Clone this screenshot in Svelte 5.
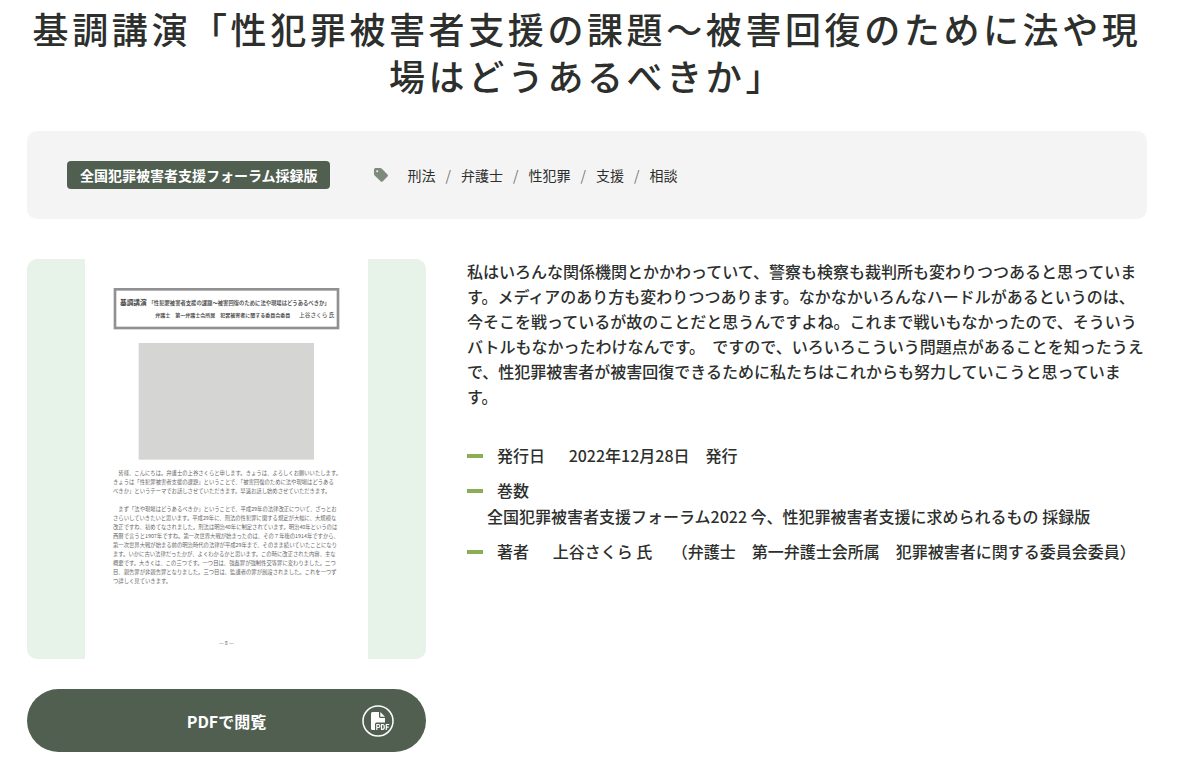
<script lang="ts">
	interface Detail {
		term: string;
		value: string;
	}

	const title = '基調講演「性犯罪被害者支援の課題～被害回復のために法や現場はどうあるべきか」';
	const category = '全国犯罪被害者支援フォーラム採録版';
	const tags = ['刑法', '弁護士', '性犯罪', '支援', '相談'];

	const description =
		'私はいろんな関係機関とかかわっていて、警察も検察も裁判所も変わりつつあると思っています。メディアのあり方も変わりつつあります。なかなかいろんなハードルがあるというのは、今そこを戦っているが故のことだと思うんですよね。これまで戦いもなかったので、そういうバトルもなかったわけなんです。\u00a0 ですので、いろいろこういう問題点があることを知ったうえで、性犯罪被害者が被害回復できるために私たちはこれからも努力していこうと思っています。';

	const details: Detail[] = [
		{ term: '発行日', value: '2022年12月28日　発行' },
		{ term: '巻数', value: '全国犯罪被害者支援フォーラム2022 今、性犯罪被害者支援に求められるもの 採録版' },
		{ term: '著者', value: '上谷さくら 氏 　（弁護士　第一弁護士会所属　犯罪被害者に関する委員会委員）' }
	];

	// First page of the document, line by line
	const pageLines = [
		'　皆様、こんにちは。弁護士の上谷さくらと申します。きょうは、よろしくお願いいたします。',
		'きょうは「性犯罪被害者支援の課題」ということで、「被害回復のために法や現場はどうある',
		'べきか」というテーマでお話しさせていただきます。早速お話し始めさせていただきます。',
		'',
		'　まず「法や現場はどうあるべきか」ということで、平成29年の法律改正について、ざっとお',
		'さらいしていきたいと思います。平成29年に、刑法の性犯罪に関する規定が大幅に、大規模な',
		'改正ですね、初めてなされました。刑法は明治40年に制定されています。明治40年というのは',
		'西暦で言うと1907年ですね。第一次世界大戦が始まったのは、その７年後の1914年ですから、',
		'第一次世界大戦が始まる前の明治時代の法律が平成29年まで、そのまま続いていたことになり',
		'ます。いかに古い法律だったかが、よくわかるかと思います。この時に改正された内容、主な',
		'概要です。大きくは、この三つです。一つ目は、強姦罪が強制性交等罪に変わりました。二つ',
		'目、親告罪が非親告罪となりました。三つ目は、監護者の罪が創設されました。これを一つず',
		'つ詳しく見ていきます。'
	];
</script>

<svelte:head>
	<title>{title}</title>
</svelte:head>

<main class="article" lang="ja">
	<h1>{title}</h1>

	<div class="meta">
		<span class="category">{category}</span>
		<div class="tags">
			<svg class="tag-icon" viewBox="0 0 14 14" aria-hidden="true">
				<path
					fill-rule="evenodd"
					d="M0 1.5Q0 0 1.5 0H6Q7 0 7.6.6L13.5 6.5Q14.4 7.5 13.5 8.5L8.8 13.3Q7.7 14.3 6.6 13.3L.6 7.4Q0 6.8 0 6ZM3.2 2.3a.9.9 0 1 0 .01 0Z"
				/>
			</svg>
			<ul>
				{#each tags as tag}
					<li><a href="#{tag}">{tag}</a></li>
				{/each}
			</ul>
		</div>
	</div>

	<div class="content">
		<div class="media">
			<div class="preview">
				<svg viewBox="0 0 849 1200" role="img" aria-label={title}>
					<rect class="paper" width="849" height="1200" />
					<rect class="frame" x="90" y="91" width="669" height="116" />
					<text class="page-title" x="105" y="137">基調講演</text>
					<text class="page-subtitle" x="734" y="137" text-anchor="end">「性犯罪被害者支援の課題～被害回復のために法や現場はどうあるべきか」</text>
					<text class="page-author" x="211" y="175">弁護士　第一弁護士会所属　犯罪被害者に関する委員会委員</text>
					<text class="page-speaker" x="748" y="175" text-anchor="end">上谷さくら 氏</text>
					<rect class="photo" x="161" y="252" width="526" height="350" />
					{#each pageLines as line, i}
						<text class="page-line" x="84" y={647 + i * 27}>{line}</text>
					{/each}
					<text class="page-line" x="424" y="1158" text-anchor="middle">— 8 —</text>
				</svg>
			</div>

			<a class="pdf-button" href="#pdf">
				<span class="pdf-label">PDFで閲覧</span>
				<svg class="pdf-icon" viewBox="0 0 32 32" aria-hidden="true">
					<circle cx="16" cy="16" r="15" fill="none" stroke="#fff" stroke-width="1.5" />
					<path d="M10.5 7H17V11.5Q17 13 18.5 13H23V17.5H14.5Q13 17.5 13 19V25H10.5Q9 25 9 23.5V8.5Q9 7 10.5 7ZM18.3 7L23 11.7H18.3Z" fill="#fff" />
					<path
						d="M14.8 25V19.5H16.5Q17.8 19.5 17.8 21T16.5 22.5H14.8M19.5 19.5V24.4H20.6Q22.3 24.4 22.3 22T20.6 19.5ZM24.3 25V19.5H27.2M24.3 22.2H26.7"
						fill="none"
						stroke="#fff"
						stroke-width="1.2"
					/>
				</svg>
			</a>
		</div>

		<div class="info">
			<p>{description}</p>
			<dl>
				{#each details as detail}
					<div class="row">
						<dt>{detail.term}</dt>
						<dd>{detail.value}</dd>
					</div>
				{/each}
			</dl>
		</div>
	</div>
</main>

<style>
	:global(body) {
		margin: 0;
		background: #fff;
	}

	.article {
		max-width: 1120px;
		margin: 0 auto;
		padding: 5px 30px 0 27px;
		font-family: 'Noto Sans CJK JP', sans-serif;
		font-size: 16px;
		font-weight: 500;
		line-height: 26px;
		color: #2d2f2d;
	}

	h1 {
		margin: 0 0 32px;
		font-size: 36px;
		font-weight: 500;
		line-height: 47px;
		letter-spacing: 0.1em;
		text-align: center;
	}

	a {
		color: inherit;
		text-decoration: none;
	}

	/* Category and tags */
	.meta {
		display: flex;
		flex-wrap: wrap;
		align-items: center;
		gap: 20px 44px;
		padding: 30px 40px;
		border-radius: 10px;
		background: #f4f4f4;
		font-size: 14px;
		line-height: 28px;
	}

	.category {
		padding: 0 12px 0 13px;
		border-radius: 4px;
		background: #515f51;
		color: #fff;
		font-weight: 700;
	}

	.tags {
		display: flex;
		align-items: center;
		gap: 20px;
		font-weight: 400;
	}

	.tag-icon {
		width: 14px;
		height: 14px;
		fill: #7d8b7d;
	}

	ul {
		display: flex;
		flex-wrap: wrap;
		margin: 0;
		padding: 0;
		list-style: none;
	}

	li + li::before {
		content: '/';
		margin: 0 10px;
		color: #777;
	}

	/* Document */
	.content {
		display: grid;
		grid-template-columns: minmax(0, 399fr) minmax(0, 680fr);
		gap: 41px;
		margin-top: 40px;
	}

	.preview {
		display: flex;
		justify-content: center;
		aspect-ratio: 399 / 400;
		border-radius: 10px;
		overflow: hidden;
		background: #e7f2e8;
	}

	.preview svg {
		height: 100%;
	}

	.paper {
		fill: #fff;
	}

	.frame {
		fill: none;
		stroke: #919194;
		stroke-width: 8px;
	}

	.photo {
		fill: #d5d5d4;
	}

	.page-title {
		font-size: 20px;
		font-weight: 700;
		fill: #444;
	}

	.page-subtitle {
		font-size: 16px;
		font-weight: 700;
		fill: #555;
	}

	.page-author {
		font-size: 15px;
		font-weight: 700;
		fill: #555;
	}

	.page-speaker {
		font-size: 17px;
		font-weight: 500;
		fill: #555;
	}

	.page-line {
		font-size: 16px;
		font-weight: 400;
		fill: #666;
	}

	.pdf-button {
		display: grid;
		grid-template-columns: 1fr auto 1fr;
		align-items: center;
		height: 63px;
		margin-top: 30px;
		border-radius: 32px;
		background: #515f51;
		color: #fff;
		font-weight: 700;
	}

	.pdf-label {
		grid-column: 2;
	}

	.pdf-icon {
		justify-self: end;
		width: 32px;
		height: 32px;
		margin-right: 32px;
	}

	/* Details */
	p {
		margin: 0;
		line-height: 25px;
	}

	dl {
		margin: 33px 0 0;
		text-spacing-trim: space-all;
	}

	.row + .row {
		margin-top: 9px;
	}

	dt {
		display: inline;
	}

	dt::before {
		content: '';
		display: inline-block;
		width: 16px;
		height: 4px;
		margin-right: 14px;
		background: #8aad56;
		vertical-align: 4px;
	}

	dd {
		display: inline-block;
		margin: 0 0 0 20px;
		vertical-align: top;
	}

	@media (max-width: 768px) {
		h1 {
			font-size: 24px;
			line-height: 32px;
		}

		.content {
			grid-template-columns: minmax(0, 1fr);
		}
	}
</style>
